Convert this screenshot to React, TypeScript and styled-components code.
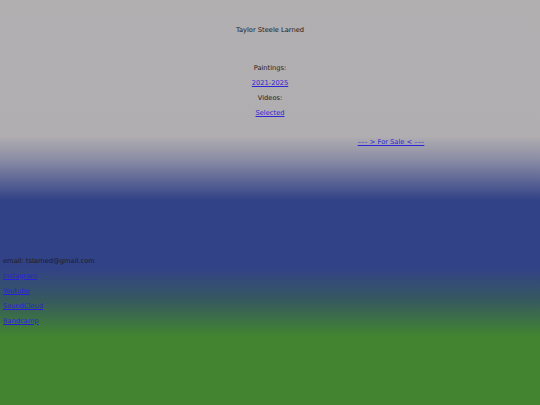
import React from 'react'
import styled, { createGlobalStyle } from 'styled-components'

const GlobalStyle = createGlobalStyle`
  html, body {
    margin: 0;
    padding: 0;
  }
  body {
    font-family: "DejaVu Sans", Verdana, sans-serif;
    font-size: 6.7px;
    color: #1c1c1e;
  }
`

const Page = styled.div`
  min-height: 405px;
  background: linear-gradient(
    to bottom,
    #b1afb0 0px,
    #b0aeb0 136px,
    #8a8ca5 160px,
    #324286 200px,
    #324286 268px,
    #36595f 300px,
    #428430 336px,
    #428430 405px
  );
  line-height: 15px;
  overflow: hidden;
`

const Header = styled.header`
  padding-top: 23px;
  text-align: center;
`

const Works = styled.nav`
  margin-top: 22.5px;
  display: flex;
  flex-direction: column;
  align-items: center;
`

const Label = styled.span`
  display: block;
`

const Link = styled.a`
  display: block;
  color: #2d25d6;
  text-decoration: underline;
`

const SaleRow = styled.div`
  margin-top: 14.5px;
  padding-left: 242px;
  text-align: center;
`

const Contact = styled.footer`
  margin-top: 103.5px;
  padding-left: 3px;
  display: flex;
  flex-direction: column;
  align-items: flex-start;

  a {
    color: #2a20d8;
  }
`

export default function App() {
  const socials = ['Instagram', 'Youtube', 'SoundCloud', 'Bandcamp']

  return (
    <>
      <GlobalStyle />
      <Page>
        <Header>Taylor Steele Larned</Header>
        <Works>
          <Label>Paintings:</Label>
          <Link href="#">2021-2025</Link>
          <Label>Videos:</Label>
          <Link href="#">Selected</Link>
        </Works>
        <SaleRow>
          <Link href="#">––– &gt; For Sale &lt; –––</Link>
        </SaleRow>
        <Contact>
          <Label>email: tslarned@gmail.com</Label>
          {socials.map((s) => (
            <Link key={s} href="#">{s}</Link>
          ))}
        </Contact>
      </Page>
    </>
  )
}
